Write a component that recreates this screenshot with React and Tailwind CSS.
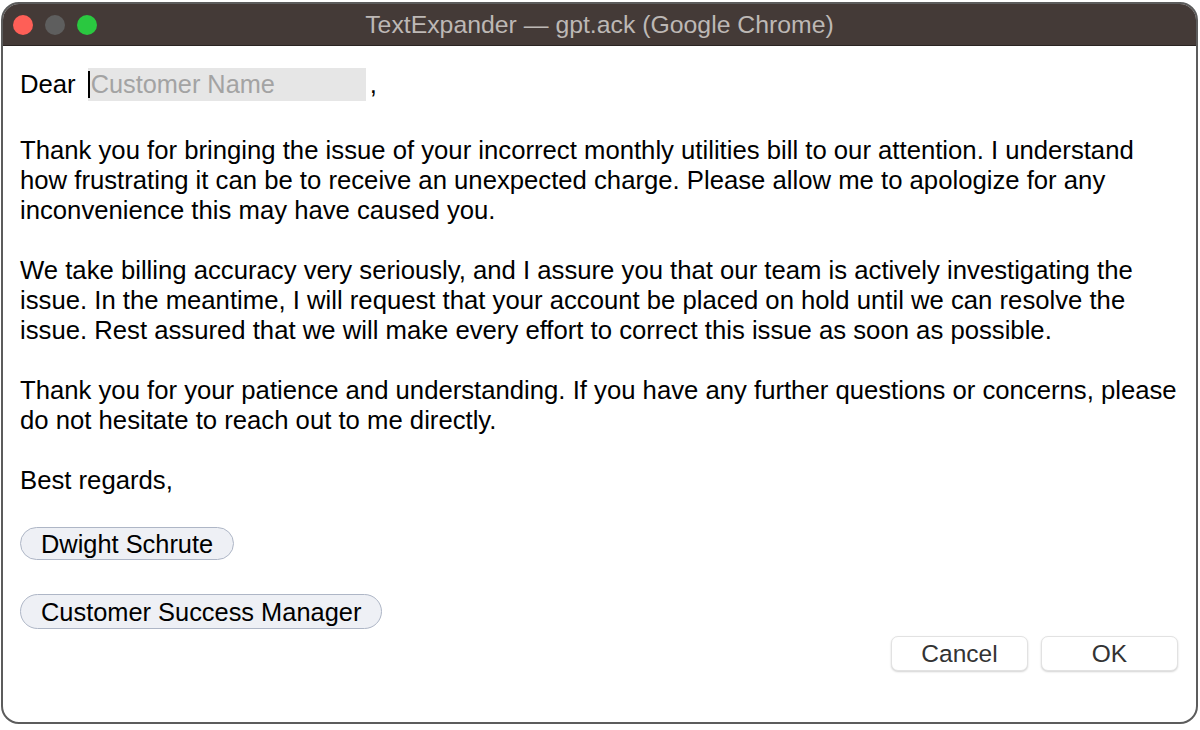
import React from 'react';

const font = { fontFamily: '"Liberation Sans", Arial, sans-serif' };

export default function App() {
  return (
    <div className="w-[1200px] h-[730px] bg-white pt-[2px] px-[1px]" style={font}>
      <div className="w-[1197px] h-[722px] border-2 border-[#5c5c5c] rounded-[18px] overflow-hidden flex flex-col bg-white">
        {/* title bar */}
        <div className="h-[42px] shrink-0 bg-[#443a37] border-b border-[#2a2422] relative flex items-center justify-center">
          <div className="absolute left-[10px] top-[11px] flex gap-[12px]">
            <span className="w-[20px] h-[20px] rounded-full bg-[#fe5f57]" />
            <span className="w-[20px] h-[20px] rounded-full bg-[#5e5e5e]" />
            <span className="w-[20px] h-[20px] rounded-full bg-[#2ac840]" />
          </div>
          <span className="text-[24.8px] text-[#bdb8b5]">TextExpander — gpt.ack (Google Chrome)</span>
        </div>

        {/* body */}
        <div className="flex-1 flex flex-col pl-[17px] pr-[10px] pt-[21px] text-[25.7px] leading-[30px] text-black">
          <div className="flex items-center h-[34px]">
            <span>Dear</span>
            <div className="ml-[12px] w-[278px] h-[33px] bg-[#e6e6e6] flex items-center">
              <span className="w-[2px] h-[27px] bg-black" />
              <span className="text-[#a3a3a3] ml-[1px] text-[25.3px]">Customer Name</span>
            </div>
            <span className="ml-[4px]">,</span>
          </div>

          <p className="mt-[34px] whitespace-nowrap">
            Thank you for bringing the issue of your incorrect monthly utilities bill to our attention. I understand<br />
            how frustrating it can be to receive an unexpected charge. Please allow me to apologize for any<br />
            inconvenience this may have caused you.
          </p>
          <p className="mt-[30px] whitespace-nowrap">
            We take billing accuracy very seriously, and I assure you that our team is actively investigating the<br />
            issue. In the meantime, I will request that your account be placed on hold until we can resolve the<br />
            issue. Rest assured that we will make every effort to correct this issue as soon as possible.
          </p>
          <p className="mt-[30px] whitespace-nowrap">
            Thank you for your patience and understanding. If you have any further questions or concerns, please<br />
            do not hesitate to reach out to me directly.
          </p>
          <p className="mt-[30px]">Best regards,</p>

          <div className="mt-[32px] text-[25.4px]">
            <span className="inline-flex items-center h-[33px] px-[20px] rounded-full bg-[#eef0f5] border border-[#aeb6c6]">Dwight Schrute</span>
          </div>
          <div className="mt-[34px] text-[25.4px]">
            <span className="inline-flex items-center h-[35px] px-[20px] rounded-full bg-[#eef0f5] border border-[#aeb6c6]">Customer Success Manager</span>
          </div>

          <div className="flex justify-end gap-[13px] mt-[7px] pr-[8px]">
            <button className="w-[137px] h-[35px] rounded-[7px] bg-white border border-[#e2e2e2] shadow-[0_1px_2px_rgba(0,0,0,0.18)] text-[24.5px] text-[#333]">Cancel</button>
            <button className="w-[137px] h-[35px] rounded-[7px] bg-white border border-[#e2e2e2] shadow-[0_1px_2px_rgba(0,0,0,0.18)] text-[24.5px] text-[#333]">OK</button>
          </div>
        </div>
      </div>
    </div>
  );
}
